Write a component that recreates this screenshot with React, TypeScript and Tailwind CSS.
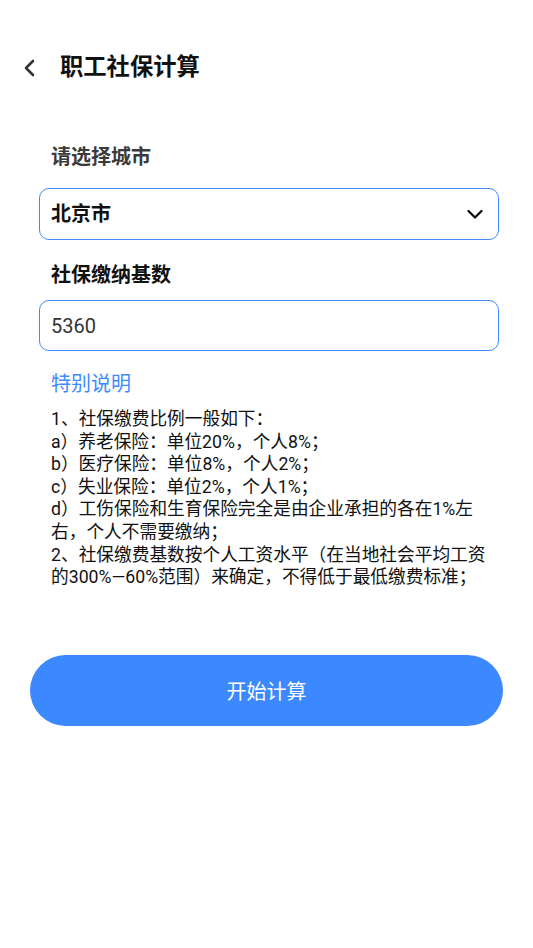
const rules = [
  '1、社保缴费比例一般如下：',
  'a）养老保险：单位20%，个人8%；',
  'b）医疗保险：单位8%，个人2%；',
  'c）失业保险：单位2%，个人1%；',
  'd）工伤保险和生育保险完全是由企业承担的各在1%左右，个人不需要缴纳；',
  '2、社保缴费基数按个人工资水平（在当地社会平均工资的300%—60%范围）来确定，不得低于最低缴费标准；',
];

export default function App() {
  return (
    <div
      className="w-[533px] h-[948px] bg-white text-[#111] overflow-hidden"
      style={{ fontFamily: 'Roboto, "Noto Sans CJK SC", sans-serif' }}
    >
      {/* Header */}
      <div className="flex items-center h-[66px] mt-[35px] pl-[22px]">
        <svg className="w-[16px] h-[18px]" viewBox="0 0 16 18" fill="none">
          <path d="M11 2 L4 9 L11 16" stroke="#333" strokeWidth={2.6} strokeLinecap="round" strokeLinejoin="round" />
        </svg>
        <h1 className="ml-[22px] text-[23.3px] font-bold leading-none">职工社保计算</h1>
      </div>

      <div className="pl-[39px] pr-[34px] mt-[44px]">
        <div className="pl-[12px] text-[20px] font-semibold text-[#3a3a3a] leading-[24px]">请选择城市</div>

        {/* City select */}
        <div className="mt-[19px] h-[52px] rounded-[10px] border-[1.5px] border-[#3d8bff] flex items-center justify-between pl-[11px] pr-[15px]">
          <span className="text-[20px] font-bold leading-none">北京市</span>
          <svg className="w-[16px] h-[11px]" viewBox="0 0 16 11" fill="none">
            <path d="M1.5 2 L8 8.5 L14.5 2" stroke="#111" strokeWidth={2.3} strokeLinecap="round" strokeLinejoin="round" />
          </svg>
        </div>

        <div className="mt-[23px] pl-[12px] text-[20px] font-bold leading-[24px]">社保缴纳基数</div>

        {/* Base input */}
        <div className="mt-[13px] h-[51px] rounded-[10px] border-[1.5px] border-[#3d8bff] flex items-center pl-[11px]">
          <span className="text-[20px] text-[#333] leading-none">5360</span>
        </div>

        <div className="mt-[21px] pl-[12px] text-[20px] text-[#3d8bff] leading-[24px]">特别说明</div>

        {/* Notes */}
        <div className="mt-[12px] pl-[12px] pr-[4px] text-[17.7px] leading-[22.6px] text-[#111]">
          {rules.map((r) => (
            <p key={r}>{r}</p>
          ))}
        </div>
      </div>

      <div className="px-[30px] mt-[66px]">
        <button className="w-[473px] h-[71px] rounded-full bg-[#3c88fe] text-white text-[20px] flex items-center justify-center pt-[3px]">
          开始计算
        </button>
      </div>
    </div>
  );
}
